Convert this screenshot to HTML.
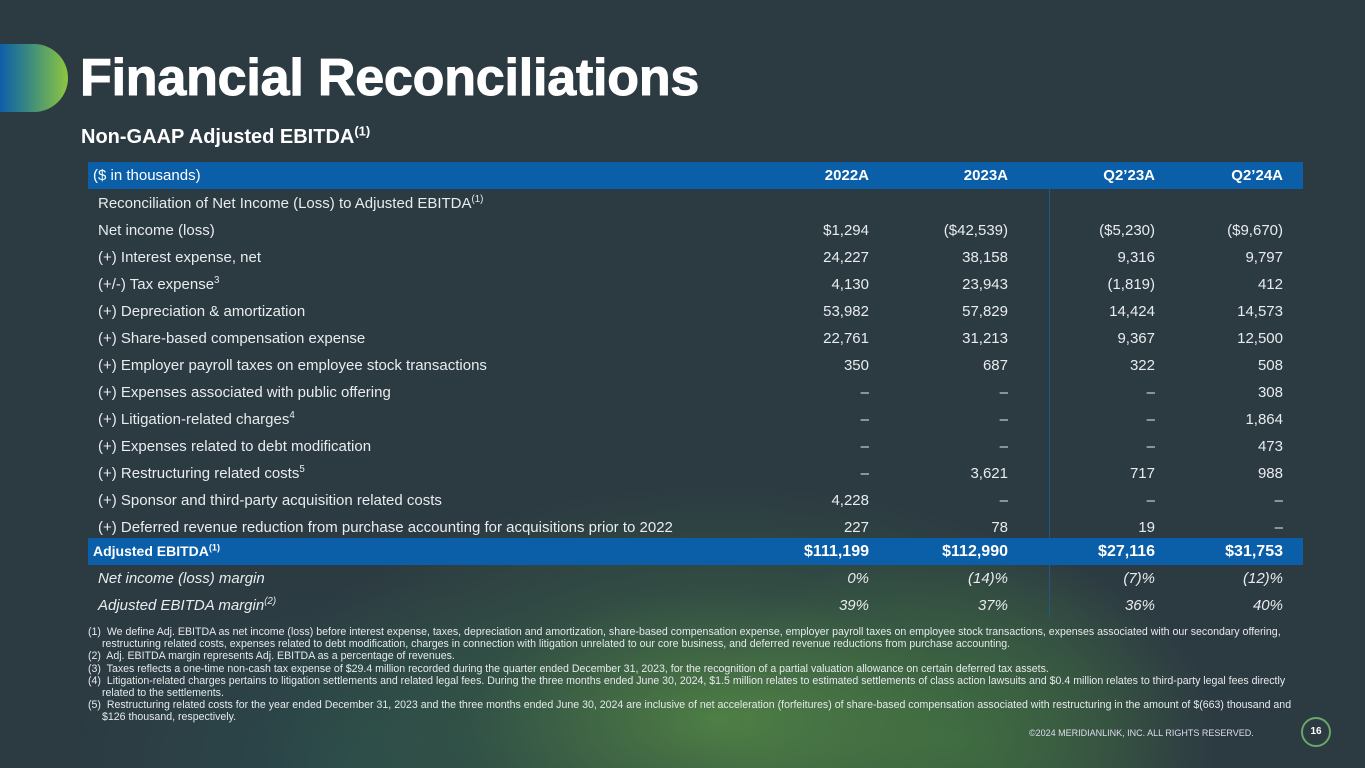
<!DOCTYPE html><html><head><meta charset="utf-8"><style>
body{margin:0;width:1365px;height:768px;overflow:hidden;font-family:"Liberation Sans",sans-serif;color:#fff;position:relative;
background:radial-gradient(ellipse 460px 240px at 720px 720px,rgba(90,150,70,.75),rgba(60,110,70,.35) 55%,rgba(0,0,0,0) 100%),radial-gradient(ellipse 260px 200px at 960px 740px,rgba(80,140,60,.6),rgba(0,0,0,0) 100%),radial-gradient(ellipse 300px 180px at 350px 760px,rgba(40,100,90,.35),rgba(0,0,0,0) 100%),#2c3a42;}
.pill{position:absolute;left:0;top:44px;width:68px;height:68px;border-radius:0 34px 34px 0;background:linear-gradient(90deg,#0d5ea8,#3f8d7c 45%,#8dc63f);}
h1{position:absolute;left:80px;top:44px;margin:0;font-size:52px;font-weight:900;letter-spacing:-0.2px;line-height:68px;-webkit-text-stroke:1px #fff;}
h2{position:absolute;left:81px;top:126px;margin:0;font-size:20px;font-weight:bold;}
sup{font-size:65%;vertical-align:super;line-height:0}
.r{position:absolute;left:88px;width:1215px;height:27px;font-size:15px;line-height:27px;color:#e8ecee}
.r span{position:absolute}
.r .l{left:10px}
.c1{right:434px}.c2{right:295px}.c3{right:148px}.c4{right:20px}
.hd{background:#0b5fa8;font-weight:bold;color:#fff}
.hd .l{left:5px;font-weight:normal}
.adj{background:#0b5fa8;font-weight:bold;color:#fff;font-size:16px}
.adj .l{left:5px;font-size:14px}
.it{font-style:italic}
.vl{position:absolute;left:1049px;top:189px;width:1px;height:428px;background:#1f5a86}
.fn{position:absolute;left:88px;top:626px;width:1222px;font-size:10.6px;line-height:12.2px;color:#e6eaec}
.fn div{padding-left:14px;text-indent:-14px}
.copy{position:absolute;left:1029px;top:728px;font-size:9px;color:#dde}
.pg{position:absolute;left:1301px;top:717px;width:26px;height:26px;border:2px solid #6aa56a;border-radius:50%;font-size:10px;font-weight:bold;text-align:center;line-height:26px}
</style></head><body>
<div class="pill"></div>
<h1>Financial Reconciliations</h1>
<h2>Non-GAAP Adjusted EBITDA<sup>(1)</sup></h2>
<div class="vl"></div>
<div class="r hd" style="top:162px"><span class="l">($ in thousands)</span><span class="c1">2022A</span><span class="c2">2023A</span><span class="c3">Q2’23A</span><span class="c4">Q2’24A</span></div>
<div class="r" style="top:190px"><span class="l">Reconciliation of Net Income (Loss) to Adjusted EBITDA<sup>(1)</sup></span></div>
<div class="r" style="top:217px"><span class="l">Net income (loss)</span><span class="c1">$1,294</span><span class="c2">($42,539)</span><span class="c3">($5,230)</span><span class="c4">($9,670)</span></div>
<div class="r" style="top:244px"><span class="l">(+) Interest expense, net</span><span class="c1">24,227</span><span class="c2">38,158</span><span class="c3">9,316</span><span class="c4">9,797</span></div>
<div class="r" style="top:271px"><span class="l">(+/-) Tax expense<sup>3</sup></span><span class="c1">4,130</span><span class="c2">23,943</span><span class="c3">(1,819)</span><span class="c4">412</span></div>
<div class="r" style="top:298px"><span class="l">(+) Depreciation &amp; amortization</span><span class="c1">53,982</span><span class="c2">57,829</span><span class="c3">14,424</span><span class="c4">14,573</span></div>
<div class="r" style="top:325px"><span class="l">(+) Share-based compensation expense</span><span class="c1">22,761</span><span class="c2">31,213</span><span class="c3">9,367</span><span class="c4">12,500</span></div>
<div class="r" style="top:352px"><span class="l">(+) Employer payroll taxes on employee stock transactions</span><span class="c1">350</span><span class="c2">687</span><span class="c3">322</span><span class="c4">508</span></div>
<div class="r" style="top:379px"><span class="l">(+) Expenses associated with public offering</span><span class="c1">–</span><span class="c2">–</span><span class="c3">–</span><span class="c4">308</span></div>
<div class="r" style="top:406px"><span class="l">(+) Litigation-related charges<sup>4</sup></span><span class="c1">–</span><span class="c2">–</span><span class="c3">–</span><span class="c4">1,864</span></div>
<div class="r" style="top:433px"><span class="l">(+) Expenses related to debt modification</span><span class="c1">–</span><span class="c2">–</span><span class="c3">–</span><span class="c4">473</span></div>
<div class="r" style="top:460px"><span class="l">(+) Restructuring related costs<sup>5</sup></span><span class="c1">–</span><span class="c2">3,621</span><span class="c3">717</span><span class="c4">988</span></div>
<div class="r" style="top:487px"><span class="l">(+) Sponsor and third-party acquisition related costs</span><span class="c1">4,228</span><span class="c2">–</span><span class="c3">–</span><span class="c4">–</span></div>
<div class="r" style="top:514px"><span class="l">(+) Deferred revenue reduction from purchase accounting for acquisitions prior to 2022</span><span class="c1">227</span><span class="c2">78</span><span class="c3">19</span><span class="c4">–</span></div>
<div class="r adj" style="top:538px"><span class="l">Adjusted EBITDA<sup>(1)</sup></span><span class="c1">$111,199</span><span class="c2">$112,990</span><span class="c3">$27,116</span><span class="c4">$31,753</span></div>
<div class="r it" style="top:565px"><span class="l">Net income (loss) margin</span><span class="c1">0%</span><span class="c2">(14)%</span><span class="c3">(7)%</span><span class="c4">(12)%</span></div>
<div class="r it" style="top:592px"><span class="l">Adjusted EBITDA margin<sup>(2)</sup></span><span class="c1">39%</span><span class="c2">37%</span><span class="c3">36%</span><span class="c4">40%</span></div>
<div class="fn">
<div>(1)&nbsp; We define Adj. EBITDA as net income (loss) before interest expense, taxes, depreciation and amortization, share-based compensation expense, employer payroll taxes on employee stock transactions, expenses associated with our secondary offering, restructuring related costs, expenses related to debt modification, charges in connection with litigation unrelated to our core business, and deferred revenue reductions from purchase accounting.</div>
<div>(2)&nbsp; Adj. EBITDA margin represents Adj. EBITDA as a percentage of revenues.</div>
<div>(3)&nbsp; Taxes reflects a one-time non-cash tax expense of $29.4 million recorded during the quarter ended December 31, 2023, for the recognition of a partial valuation allowance on certain deferred tax assets.</div>
<div>(4)&nbsp; Litigation-related charges pertains to litigation settlements and related legal fees. During the three months ended June 30, 2024, $1.5 million relates to estimated settlements of class action lawsuits and $0.4 million relates to third-party legal fees directly related to the settlements.</div>
<div>(5)&nbsp; Restructuring related costs for the year ended December 31, 2023 and the three months ended June 30, 2024 are inclusive of net acceleration (forfeitures) of share-based compensation associated with restructuring in the amount of $(663) thousand and $126 thousand, respectively.</div>
</div>
<div class="copy">©2024 MERIDIANLINK, INC. ALL RIGHTS RESERVED.</div>
<div class="pg">16</div>
</body></html>
